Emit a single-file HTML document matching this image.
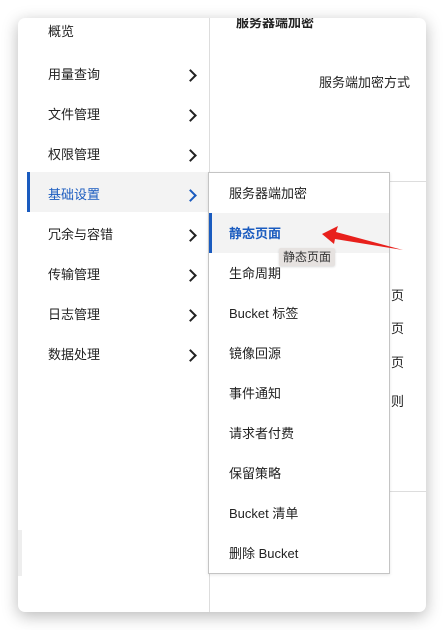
<!DOCTYPE html>
<html><head><meta charset="utf-8"><style>
*{margin:0;padding:0;box-sizing:border-box}
body{width:444px;height:630px;background:#fff;position:relative;overflow:hidden;font-family:"Liberation Sans","Noto Sans CJK SC",sans-serif;font-size:13px;color:#222}
.win{position:absolute;left:18px;top:18px;width:408px;height:594px;background:#fff;border-radius:7px;box-shadow:0 4px 16px rgba(0,0,0,.28);overflow:hidden}
.side{position:absolute;left:0;top:0;width:192px;height:594px;border-right:1px solid #ddd}
.it{position:absolute;left:30px;font-size:13px;line-height:16px}
.chev{position:absolute;left:168px;width:9px;height:9px;border-right:2px solid #222;border-top:2px solid #222;transform:rotate(45deg)}
.sel{position:absolute;left:9px;top:154px;width:183px;height:40px;background:#f3f3f3;border-left:3px solid #1a5bbf}
.dd{position:absolute;left:208px;top:172px;width:182px;height:402px;background:#fff;border:1px solid #c4c4c4;box-shadow:0 1px 3px rgba(0,0,0,.1)}
.di{position:absolute;left:20px;font-size:13px;line-height:16px;color:#222}
.tip{position:absolute;left:279px;top:248px;width:56px;height:18px;background:#e6e2e0;font-size:12px;line-height:18px;text-align:center;color:#333;border-radius:2px;box-shadow:0 1px 2px rgba(0,0,0,.15)}
</style></head><body>
<div class="win">
 <div class="side">
  <div class="sel"></div>
  <div class="it" style="top:6px">概览</div>
  <div class="it" style="top:49px">用量查询</div><div class="chev" style="top:53px"></div>
  <div class="it" style="top:89px">文件管理</div><div class="chev" style="top:93px"></div>
  <div class="it" style="top:129px">权限管理</div><div class="chev" style="top:133px"></div>
  <div class="it" style="top:169px;color:#1a5bbf">基础设置</div><div class="chev" style="top:173px;border-color:#1a5bbf"></div>
  <div class="it" style="top:209px">冗余与容错</div><div class="chev" style="top:213px"></div>
  <div class="it" style="top:249px">传输管理</div><div class="chev" style="top:253px"></div>
  <div class="it" style="top:289px">日志管理</div><div class="chev" style="top:293px"></div>
  <div class="it" style="top:329px">数据处理</div><div class="chev" style="top:333px"></div>
  <div style="position:absolute;left:0;top:512px;width:4px;height:46px;background:#eee"></div>
 </div>
 <div style="position:absolute;left:218px;top:-6px;font-weight:bold;font-size:13px">服务器端加密</div>
 <div style="position:absolute;left:301px;top:54px">服务端加密方式</div>
 <div style="position:absolute;left:192px;top:163px;width:216px;height:1px;background:#ddd"></div>
 <div style="position:absolute;left:192px;top:473px;width:216px;height:1px;background:#ddd"></div>
 <div style="position:absolute;left:373px;top:267px">页</div>
 <div style="position:absolute;left:373px;top:300px">页</div>
 <div style="position:absolute;left:373px;top:334px">页</div>
 <div style="position:absolute;left:373px;top:373px">则</div>
</div>
<div class="dd">
 <div style="position:absolute;left:0;top:40px;width:180px;height:40px;background:#f3f3f3;border-left:3px solid #1a5bbf"></div>
 <div class="di" style="top:13px">服务器端加密</div>
 <div class="di" style="top:53px;color:#1a5bbf;font-weight:bold">静态页面</div>
 <div class="di" style="top:93px">生命周期</div>
 <div class="di" style="top:133px">Bucket 标签</div>
 <div class="di" style="top:173px">镜像回源</div>
 <div class="di" style="top:213px">事件通知</div>
 <div class="di" style="top:253px">请求者付费</div>
 <div class="di" style="top:293px">保留策略</div>
 <div class="di" style="top:333px">Bucket 清单</div>
 <div class="di" style="top:373px">删除 Bucket</div>
</div>
<div class="tip">静态页面</div>
<svg style="position:absolute;left:0;top:0" width="444" height="630"><polygon points="322,234 338,226 336,232 403,250 335,239 334,244" fill="#e8201c"/></svg>
</body></html>
